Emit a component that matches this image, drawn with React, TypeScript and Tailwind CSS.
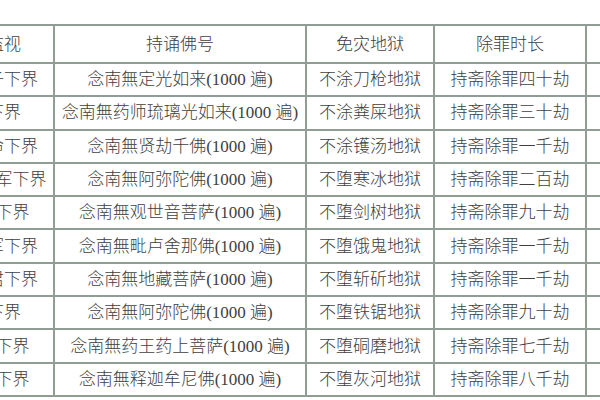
const rows = [
  ["初一童子下界", "念南無定光如来(1000 遍)", "不涂刀枪地狱", "持斋除罪四十劫"],
  ["太子下界", "念南無药师琉璃光如来(1000 遍)", "不涂粪屎地狱", "持斋除罪三十劫"],
  ["十四察命下界", "念南無贤劫千佛(1000 遍)", "不涂镬汤地狱", "持斋除罪一千劫"],
  ["五道大将军下界", "念南無阿弥陀佛(1000 遍)", "不堕寒冰地狱", "持斋除罪二百劫"],
  ["阎罗王下界", "念南無观世音菩萨(1000 遍)", "不堕剑树地狱", "持斋除罪九十劫"],
  ["天大将军下界", "念南無毗卢舍那佛(1000 遍)", "不堕饿鬼地狱", "持斋除罪一千劫"],
  ["太山府君下界", "念南無地藏菩萨(1000 遍)", "不堕斩斫地狱", "持斋除罪一千劫"],
  ["天帝下界", "念南無阿弥陀佛(1000 遍)", "不堕铁锯地狱", "持斋除罪九十劫"],
  ["四天王下界", "念南無药王药上菩萨(1000 遍)", "不堕硐磨地狱", "持斋除罪七千劫"],
  ["天帝释下界", "念南無释迦牟尼佛(1000 遍)", "不堕灰河地狱", "持斋除罪八千劫"],
];

const cell = "border-2 border-[#8f9d94] text-center whitespace-nowrap p-0";

export default function App() {
  return (
    <div className="w-[600px] h-[400px] overflow-hidden bg-white pt-[24px]">
      <table
        className="table-fixed border-collapse w-[746px] ml-[-81px] text-[17px] leading-none font-light text-[#404040]"
        style={{ fontFamily: '"Liberation Serif", "Noto Sans CJK SC", serif' }}
      >
        <colgroup>
          <col className="w-[134px]" />
          <col className="w-[252px]" />
          <col className="w-[128px]" />
          <col className="w-[152px]" />
          <col className="w-[80px]" />
        </colgroup>
        <thead>
          <tr className="h-[38px]">
            <th className={`${cell} font-light`}>下界监视</th>
            <th className={`${cell} font-light`}>持诵佛号</th>
            <th className={`${cell} font-light`}>免灾地狱</th>
            <th className={`${cell} font-light`}>除罪时长</th>
            <th className={`${cell} font-light`}></th>
          </tr>
        </thead>
        <tbody>
          {rows.map((r, i) => (
            <tr key={i} className="h-[33.3px]">
              {r.map((t, j) => (
                <td key={j} className={cell}>
                  {t}
                </td>
              ))}
              <td className={cell}></td>
            </tr>
          ))}
        </tbody>
      </table>
    </div>
  );
}
